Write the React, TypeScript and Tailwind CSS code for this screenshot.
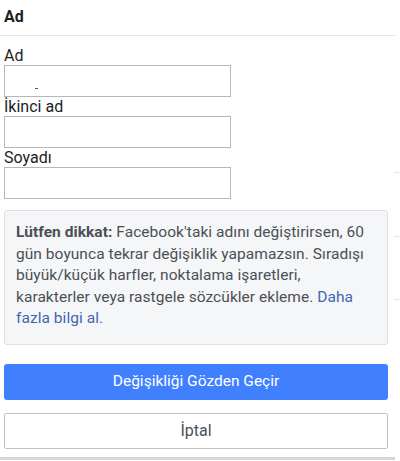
import React from "react";

function Field({ label, dash }: { label: string; dash?: boolean }) {
  return (
    <div className="flex flex-col">
      <div className="h-[19px] text-[16px] leading-[19px] text-[#1c1e21]">{label}</div>
      <div className="relative h-[32px] w-[227px] border border-[#b4b7bb] bg-white">
        {dash && <div className="absolute left-[30px] top-[22px] h-[1px] w-[3px] bg-[#555]" />}
      </div>
    </div>
  );
}

export default function App() {
  return (
    <div
      className="relative h-[461px] w-[400px] overflow-hidden bg-white"
      style={{ fontFamily: "Roboto, 'Noto Sans', Arial, sans-serif" }}
    >
      <div className="absolute right-0 top-[172px] h-[1px] w-[6px] bg-[#e4e6e9]" />
      <div className="absolute right-0 top-[236px] h-[1px] w-[6px] bg-[#e4e6e9]" />
      <div className="absolute right-0 top-[299px] h-[1px] w-[6px] bg-[#e4e6e9]" />

      <div className="h-[36px] w-[395px] border-b border-[#e4e6e9] px-[4px] pt-[7px]">
        <div className="text-[16px] font-bold leading-[19px] text-[#1c1e21]">Ad</div>
      </div>

      <div className="flex flex-col px-[4px] pt-[10px]">
        <Field label="Ad" dash />
        <Field label="İkinci ad" />
        <Field label="Soyadı" />

        <div className="mt-[11px] h-[135px] w-[384px] rounded-[3px] border border-[#dddfe2] bg-[#f5f6f7] px-[11px] pt-[11px]">
          <p className="whitespace-nowrap text-[15.5px] leading-[21.5px] tracking-[0.05px] text-[#4b4f56]">
            <span className="font-bold">Lütfen dikkat:</span> Facebook'taki adını değiştirirsen, 60
            <br />
            gün boyunca tekrar değişiklik yapamazsın. Sıradışı
            <br />
            büyük/küçük harfler, noktalama işaretleri,
            <br />
            karakterler veya rastgele sözcükler ekleme. <span className="text-[#4267b2]">Daha</span>
            <br />
            <span className="text-[#4267b2]">fazla bilgi al.</span>
          </p>
        </div>

        <div className="mt-[19px] flex h-[36px] w-[384px] items-center justify-center rounded-[3px] bg-[#4080ff] text-[15.5px] text-white">
          Değişikliği Gözden Geçir
        </div>

        <div className="mt-[13px] flex h-[36px] w-[384px] items-center justify-center rounded-[2px] border border-[#bec3c9] bg-white text-[16px] text-[#4b4f56]">
          İptal
        </div>
      </div>

      <div className="mt-[8px] h-[3px] w-[395px] bg-[#d5d7db]" />
    </div>
  );
}
